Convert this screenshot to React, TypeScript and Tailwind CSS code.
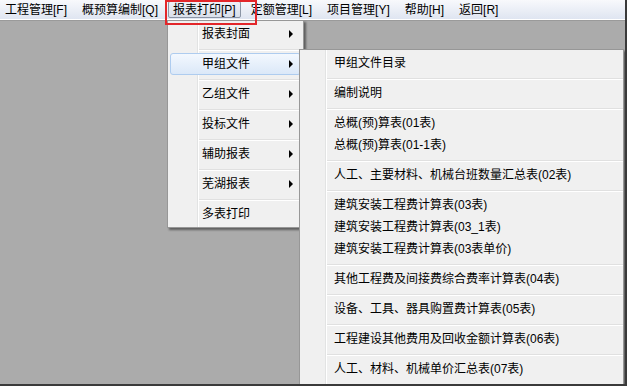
const menuBar = ["工程管理[F]", "概预算编制[Q]", "报表打印[P]", "定额管理[L]", "项目管理[Y]", "帮助[H]", "返回[R]"];

const reportMenu = [
  { label: "报表封面", sub: true },
  { label: "甲组文件", sub: true, active: true },
  { label: "乙组文件", sub: true },
  { label: "投标文件", sub: true },
  { label: "辅助报表", sub: true },
  { label: "芜湖报表", sub: true },
  { label: "多表打印", sub: false },
];

const groupA = [
  ["甲组文件目录"],
  ["编制说明"],
  ["总概(预)算表(01表)", "总概(预)算表(01-1表)"],
  ["人工、主要材料、机械台班数量汇总表(02表)"],
  ["建筑安装工程费计算表(03表)", "建筑安装工程费计算表(03_1表)", "建筑安装工程费计算表(03表单价)"],
  ["其他工程费及间接费综合费率计算表(04表)"],
  ["设备、工具、器具购置费计算表(05表)"],
  ["工程建设其他费用及回收金额计算表(06表)"],
  ["人工、材料、机械单价汇总表(07表)"],
];

const Arrow = () => (
  <span className="h-0 w-0 border-y-[4px] border-l-[4px] border-y-transparent border-l-black" />
);

export default function App() {
  return (
    <div className="relative h-[386px] w-[627px] overflow-hidden bg-[#ababab] font-['Liberation_Sans','Noto_Sans_CJK_SC',sans-serif] text-[12px] text-black">
      {/* menu bar */}
      <div className="flex h-[20px] items-center gap-[5px] border-b border-white bg-gradient-to-b from-[#f8f9fc] to-[#dfe5f1]">
        {menuBar.map((m, i) => (
          <span
            key={m}
            className={`flex h-[17px] items-center whitespace-nowrap rounded-[2px] border px-[4px] leading-none ${
              i === 2
                ? "border-[#8b95a5] bg-gradient-to-b from-[#eef1f6] to-[#d9dfea]"
                : "border-transparent"
            }`}
          >
            {m}
          </span>
        ))}
      </div>
      <div className="h-[366px] border-t border-[#9a9a9a]" />

      {/* report print dropdown */}
      <div className="absolute left-[167px] top-[20px] z-10 w-[137px] border border-[#979797] bg-[#f0f0f0] shadow-[2px_2px_2px_rgba(0,0,0,0.45)]">
        <div className="absolute bottom-0 left-[29px] top-0 w-[2px] border-l border-r border-l-[#e2e3e3] border-r-white" />
        {reportMenu.map((item, i) => (
          <div key={item.label}>
            {i > 0 && <div className="ml-[29px] h-[2px] border-b border-t border-b-white border-t-[#e0e0e0]" />}
            <div className={`pt-[2px] ${i === reportMenu.length - 1 ? "pb-[2px]" : "pb-[4px]"}`}>
              <div
                className={`relative z-10 mx-[2px] flex h-[22px] items-center rounded-[3px] border pl-[31px] pr-[7px] ${
                  item.active
                    ? "border-[#aeccef] bg-gradient-to-b from-[#f3f8fe] to-[#dbe8f8]"
                    : "border-transparent"
                }`}
              >
                <span className="flex-1 whitespace-nowrap">{item.label}</span>
                {item.sub && <Arrow />}
              </div>
            </div>
          </div>
        ))}
      </div>

      {/* 甲组文件 submenu */}
      <div className="absolute left-[299px] top-[49px] z-20 w-[325px] border border-[#979797] bg-[#f0f0f0] shadow-[2px_2px_2px_rgba(0,0,0,0.45)]">
        <div className="absolute bottom-0 left-[25px] top-0 w-[2px] border-l border-r border-l-[#e2e3e3] border-r-white" />
        {groupA.map((g, i) => (
          <div key={g[0]}>
            {i > 0 && <div className="ml-[25px] h-[2px] border-b border-t border-b-white border-t-[#e0e0e0]" />}
            <div className="pb-[4px] pt-[2px]">
              {g.map((t) => (
                <div key={t} className="relative z-10 mx-[2px] flex h-[22px] items-center border border-transparent pl-[31px]">
                  <span className="whitespace-nowrap">{t}</span>
                </div>
              ))}
            </div>
          </div>
        ))}
      </div>

      {/* red annotation */}
      <div className="pointer-events-none absolute left-[165px] top-0 z-30 h-[25px] w-[92px] border-2 border-[#e3262a]" />

      {/* window frame */}
      <div className="pointer-events-none absolute inset-0 z-40 border-b-2 border-r-2 border-[#3a3a3a]" />
    </div>
  );
}
